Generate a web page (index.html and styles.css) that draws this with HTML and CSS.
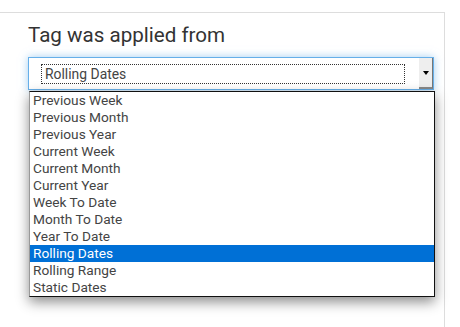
FILE: index.html
```html
<!DOCTYPE html>
<html lang="en">
<head>
    <meta charset="UTF-8">
    <meta name="viewport" content="width=device-width, initial-scale=1.0">
    <title>Tag filter</title>
    <link rel="stylesheet" href="styles.css">
</head>
<body>
    <div class="panel">
        <h3 class="field-title">Tag was applied from</h3>
        <div class="select-wrap">
            <div class="select-box">
                <div class="select-value">Rolling Dates</div>
                <div class="select-arrow"><span class="arrow-tri"></span></div>
            </div>
            <ul class="select-list">
                <li>Previous Week</li>
                <li>Previous Month</li>
                <li>Previous Year</li>
                <li>Current Week</li>
                <li>Current Month</li>
                <li>Current Year</li>
                <li>Week To Date</li>
                <li>Month To Date</li>
                <li>Year To Date</li>
                <li class="selected">Rolling Dates</li>
                <li>Rolling Range</li>
                <li>Static Dates</li>
            </ul>
        </div>
    </div>
</body>
</html>
```

FILE: styles.css
```css
body {
    font-family: Roboto, "Liberation Sans", sans-serif;
    margin: 0;
    padding: 0;
    background-color: #fff;
    color: #333;
    overflow: hidden;
}

.panel {
    margin-top: 12px;
    margin-left: -1px;
    width: 446px;
    height: 330px;
    border-top: 1px solid #ddd;
    border-right: 1px solid #ddd;
    box-sizing: border-box;
    padding: 11px 0 0 29px;
}

.field-title {
    margin: 0 0 11px 0;
    font-size: 20.6px;
    font-weight: 400;
    line-height: 22px;
    color: #333;
}

.select-wrap {
    position: relative;
    width: 406px;
}

.select-box {
    height: 33px;
    border: 1px solid #66afe9;
    box-sizing: border-box;
    box-shadow: 0 0 8px rgba(102, 175, 233, 0.6);
    background-color: #fff;
    display: flex;
    padding: 0 0 0 12px;
}

.select-value {
    flex: 1;
    margin: 6px 14px 5px 0;
    border: 1px dotted #333;
    font-size: 13.9px;
    line-height: 18px;
    padding-left: 3px;
    color: #444;
}

.select-arrow {
    width: 13px;
    background-color: #eee;
    border-right: 1px solid #777;
    border-bottom: 2px solid #888;
    display: flex;
    align-items: center;
    justify-content: center;
}

.arrow-tri {
    width: 0;
    height: 0;
    border-left: 3px solid transparent;
    border-right: 3px solid transparent;
    border-top: 4px solid #000;
}

.select-list {
    position: absolute;
    top: 34px;
    left: 1px;
    width: 406px;
    margin: 0;
    padding: 0;
    list-style: none;
    background-color: #fff;
    border: 1px solid #111;
    border-left-color: #999;
    box-sizing: border-box;
    box-shadow: 0 5px 12px rgba(0, 0, 0, 0.45);
}

.select-list li {
    height: 17px;
    line-height: 17px;
    font-size: 13.7px;
    padding-left: 3px;
    color: #444;
}

.select-list li.selected {
    background-color: #0070d6;
    color: #fff;
}
```
